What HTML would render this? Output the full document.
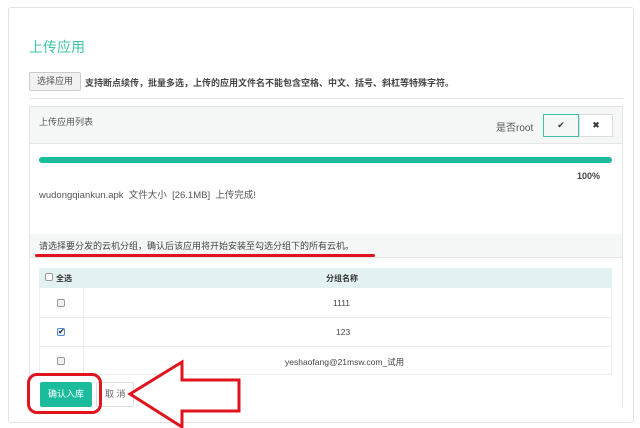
<!DOCTYPE html>
<html><head><meta charset="utf-8"><style>
*{margin:0;padding:0;box-sizing:border-box}
body{width:640px;height:428px;background:#fff;font-family:"Liberation Sans","Noto Sans CJK SC",sans-serif;position:relative;overflow:hidden;color:#555}
.a{position:absolute}
</style></head><body>
<div class="a" style="left:8px;top:7px;width:626px;height:416px;border:1px solid #e3e3e3;border-radius:3px"></div>
<div class="a" style="left:29px;top:37px;font-size:14px;color:#3cc4a4">上传应用</div>
<div class="a" style="left:29px;top:72px;width:52px;height:19px;border:1px solid #ccc;background:#f2f2f2;font-size:9px;line-height:17px;text-align:center;border-radius:2px">选择应用</div>
<div class="a" style="left:85px;top:76px;font-size:9px;font-weight:bold;color:#444;white-space:nowrap">支持断点续传，批量多选，上传的应用文件名不能包含空格、中文、括号、斜杠等特殊字符。</div>
<div class="a" style="left:29px;top:98px;width:594px;height:1px;background:#e5e5e5"></div>
<div class="a" style="left:29px;top:106px;width:594px;height:301px;border:1px solid #e5e5e5;border-bottom:none"></div>
<div class="a" style="left:30px;top:107px;width:592px;height:37px;background:#f5f6f6;border-bottom:1px solid #e5e5e5"></div>
<div class="a" style="left:39px;top:115px;font-size:9px;color:#555">上传应用列表</div>
<div class="a" style="left:496px;top:119px;font-size:10px;color:#555">是否root</div>
<div class="a" style="left:543px;top:114px;width:36px;height:23px;border:1px solid #3cc4a4;background:#f5f6f6;text-align:center;line-height:21px;font-size:9px;color:#333">✔</div>
<div class="a" style="left:579px;top:114px;width:34px;height:23px;border:1px solid #ddd;background:#fff;text-align:center;line-height:21px;font-size:9px;color:#333">✖</div>
<div class="a" style="left:39px;top:157px;width:573px;height:6px;background:#1abc9c;border-radius:3px"></div>
<div class="a" style="left:577px;top:171px;font-size:9px;color:#444;font-weight:bold">100%</div>
<div class="a" style="left:39px;top:187px;font-size:9.5px;color:#555">wudongqiankun.apk &nbsp;文件大小 &nbsp;[26.1MB] &nbsp;上传完成!</div>
<div class="a" style="left:30px;top:234px;width:592px;height:24px;background:#f5f6f6;border-bottom:1px solid #e5e5e5"></div>
<div class="a" style="left:39px;top:239px;font-size:9px;color:#444">请选择要分发的云机分组，确认后该应用将开始安装至勾选分组下的所有云机。</div>
<div class="a" style="left:35px;top:254px;width:340px;height:3px;background:#e0141e;border-radius:2px"></div>
<div class="a" style="left:39px;top:268px;width:573px;height:20px;background:#e4f1f3"></div>
<div class="a" style="left:45px;top:273px;width:8px;height:8px;border:1px solid #999;background:#fff;border-radius:2px"></div>
<div class="a" style="left:56px;top:273px;font-size:8px;font-weight:bold;color:#333">全选</div>
<div class="a" style="left:326px;top:273px;font-size:8px;font-weight:bold;color:#333">分组名称</div>
<div class="a" style="left:39px;top:288px;width:573px;height:87px;border-left:1px solid #eee;border-right:1px solid #eee;border-bottom:1px solid #eee"></div>
<div class="a" style="left:39px;top:317px;width:573px;height:1px;background:#eee"></div>
<div class="a" style="left:39px;top:346px;width:573px;height:1px;background:#eee"></div>
<div class="a" style="left:83px;top:288px;width:1px;height:87px;background:#eee"></div>
<div class="a" style="left:57px;top:299px;width:8px;height:8px;border:1px solid #999;background:#f2f2f2;border-radius:2px"></div>
<div class="a" style="left:57px;top:328px;width:8px;height:8px;border:1px solid #5588cc;background:#e8f0fb;border-radius:2px;font-size:8px;line-height:6px;color:#222">✔</div>
<div class="a" style="left:57px;top:357px;width:8px;height:8px;border:1px solid #999;background:#f2f2f2;border-radius:2px"></div>
<div class="a" style="left:333px;top:298px;font-size:8.5px;color:#444">1111</div>
<div class="a" style="left:336px;top:327px;font-size:8.5px;color:#444">123</div>
<div class="a" style="left:285px;top:356px;font-size:8.5px;color:#444">yeshaofang@21msw.com_试用</div>
<div class="a" style="left:40px;top:382px;width:52px;height:25px;background:#1abc9c;color:#fff;font-size:9px;line-height:25px;text-align:center;border-radius:2px">确认入库</div>
<div class="a" style="left:96px;top:382px;width:38px;height:25px;border:1px solid #ddd;background:#fff;color:#666;font-size:9px;line-height:23px;padding-left:8px;border-radius:2px">取 消</div>
<div class="a" style="left:27px;top:373px;width:75px;height:41px;border:3px solid #e0141e;border-radius:10px"></div>
<svg class="a" style="left:0;top:0" width="640" height="428"><polygon points="130,394 182,362 182,380 239,380 239,411 182,411 182,427" fill="#fff" stroke="#e0141e" stroke-width="3" stroke-linejoin="miter"/></svg>
</body></html>
